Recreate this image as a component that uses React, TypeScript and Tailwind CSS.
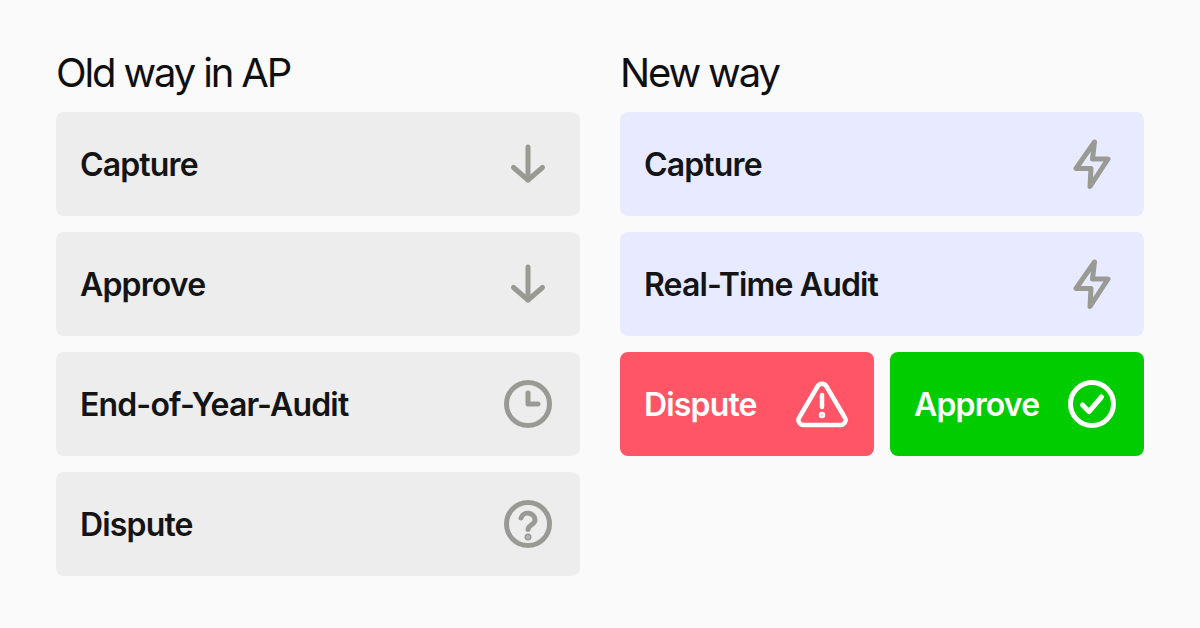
import React from 'react';

const ArrowIcon = () => (
  <svg width="48" height="48" viewBox="0 0 48 48" fill="none" stroke="#9a9a95" strokeWidth="5" strokeLinecap="round" strokeLinejoin="round">
    <path d="M24 7V40" />
    <path d="M9.5 27.5L24 40L38.5 27.5" />
  </svg>
);

const BoltIcon = () => (
  <svg width="48" height="56" viewBox="0 0 48 56" fill="none" stroke="#9a9a95" strokeWidth="5" strokeLinecap="round" strokeLinejoin="round">
    <path d="M26.5 6L8 32.5H23L22 50.5L40 23H24.5L26.5 6Z" />
  </svg>
);

const ClockIcon = () => (
  <svg width="48" height="48" viewBox="0 0 48 48" fill="none" stroke="#9a9a95" strokeWidth="5" strokeLinecap="round" strokeLinejoin="round">
    <circle cx="24" cy="24" r="21.5" />
    <path d="M24 13V24H34" />
  </svg>
);

const HelpIcon = () => (
  <svg width="48" height="48" viewBox="0 0 48 48" fill="none" stroke="#9a9a95" strokeWidth="5" strokeLinecap="round" strokeLinejoin="round">
    <circle cx="24" cy="24" r="21.5" />
    <path d="M17 18a7.2 7.2 0 0 1 14 2c0 4.5-7 5-7 9.5" />
    <circle cx="24" cy="37" r="1" fill="#9a9a95" />
  </svg>
);

const WarnIcon = () => (
  <svg width="52" height="48" viewBox="0 0 52 48" fill="none" stroke="#fff" strokeWidth="4.5" strokeLinecap="round" strokeLinejoin="round">
    <path d="M21.5 6.5a5 5 0 0 1 9 0L48.5 37a5 5 0 0 1-4.5 8H8a5 5 0 0 1-4.5-8Z" />
    <path d="M26 15V27" />
    <circle cx="26" cy="35" r="1" fill="#fff" />
  </svg>
);

const CheckIcon = () => (
  <svg width="48" height="48" viewBox="0 0 48 48" fill="none" stroke="#fff" strokeWidth="5" strokeLinecap="round" strokeLinejoin="round">
    <circle cx="24" cy="24" r="21.5" />
    <path d="M14.5 25L21 31.5L33.5 17" />
  </svg>
);

const Row = ({ label, icon, tone }: { label: string; icon: React.ReactNode; tone: string }) => (
  <div className={`h-[104px] rounded-lg flex items-center justify-between pl-6 pr-7 ${tone}`}>
    <span className="pt-0.5 text-[32px] font-semibold tracking-[-0.85px] text-[#141414]">{label}</span>
    {icon}
  </div>
);

const Title = ({ children }: { children: React.ReactNode }) => (
  <h2 className="h-[48px] mb-4 pt-px text-[40px] leading-[48px] tracking-[-2.15px] text-[#0f0f0f]">{children}</h2>
);

export default function App() {
  return (
    <div className="w-[1200px] h-[628px] bg-[#fafafa] px-14 pt-12 flex gap-10 font-['Inter',sans-serif]">
      <div className="w-[524px] flex flex-col">
        <Title>Old way in AP</Title>
        <div className="flex flex-col gap-4">
          <Row label="Capture" icon={<ArrowIcon />} tone="bg-[#ededed]" />
          <Row label="Approve" icon={<ArrowIcon />} tone="bg-[#ededed]" />
          <Row label="End-of-Year-Audit" icon={<ClockIcon />} tone="bg-[#ededed]" />
          <Row label="Dispute" icon={<HelpIcon />} tone="bg-[#ededed]" />
        </div>
      </div>
      <div className="w-[524px] flex flex-col">
        <Title>New way</Title>
        <div className="flex flex-col gap-4">
          <Row label="Capture" icon={<BoltIcon />} tone="bg-[#e8ebff]" />
          <Row label="Real-Time Audit" icon={<BoltIcon />} tone="bg-[#e8ebff]" />
          <div className="flex gap-4">
            <div className="w-[254px] h-[104px] rounded-lg bg-[#ff5566] flex items-center justify-between pl-6 pr-[26px]">
              <span className="pt-0.5 text-[32px] font-semibold tracking-[-0.85px] text-white">Dispute</span>
              <WarnIcon />
            </div>
            <div className="w-[254px] h-[104px] rounded-lg bg-[#00cc00] flex items-center justify-between pl-6 pr-7">
              <span className="pt-0.5 text-[32px] font-semibold tracking-[-0.85px] text-white">Approve</span>
              <CheckIcon />
            </div>
          </div>
        </div>
      </div>
    </div>
  );
}
